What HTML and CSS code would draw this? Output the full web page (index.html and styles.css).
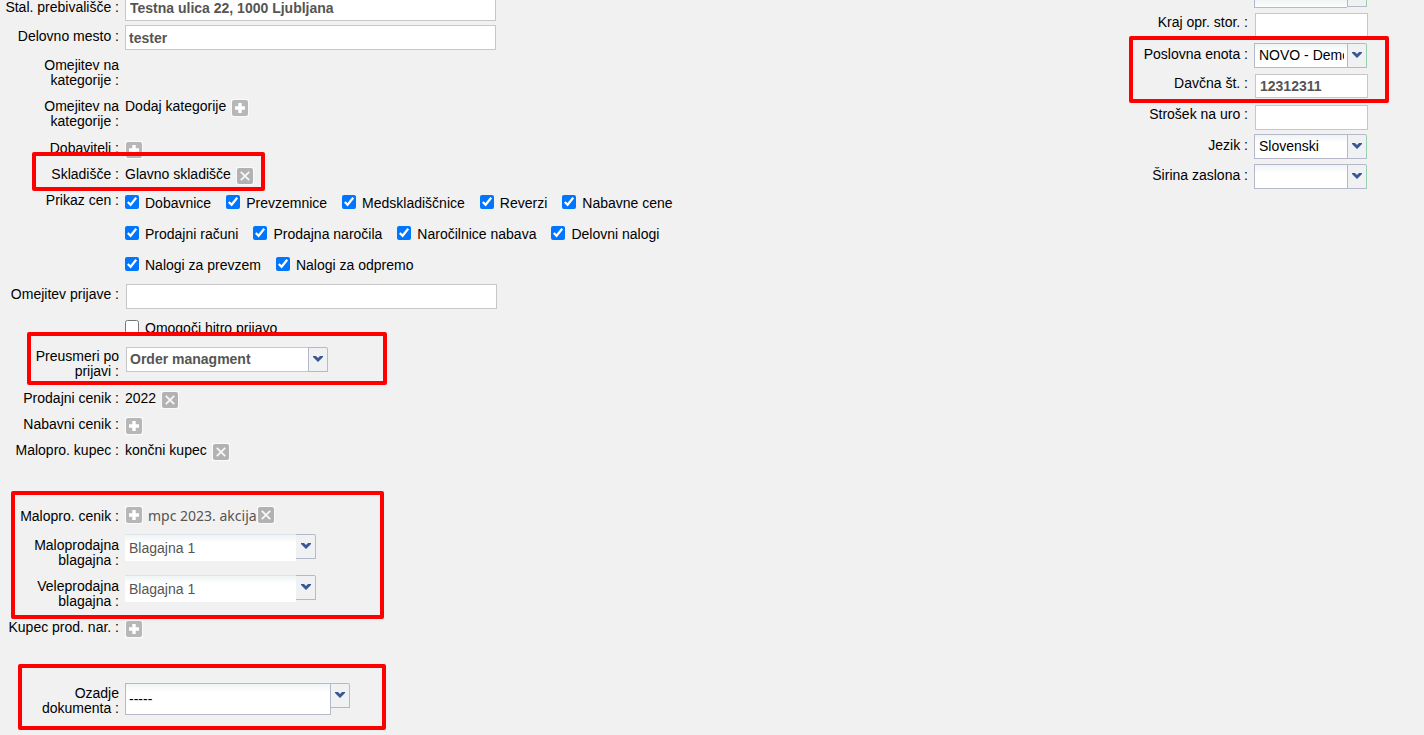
FILE: index.html
```html
<!DOCTYPE html>
<html lang="sl">
<head>
<meta charset="utf-8">
<meta name="viewport" content="width=device-width, initial-scale=1">
<title>Nastavitve uporabnika</title>
<link rel="stylesheet" href="styles.css">
</head>
<body>
<svg class="sprite" aria-hidden="true">
  <symbol id="plus" viewBox="0 0 18 18"><rect width="18" height="18" fill="#fafafa"/><rect x="1" y="1" width="16" height="16" rx="2" fill="#b7b7b7"/><path d="M9 4v10M4 9h10" stroke="#fff" stroke-width="3.4" fill="none"/></symbol>
  <symbol id="cross" viewBox="0 0 18 18"><rect width="18" height="18" fill="#fafafa"/><rect x="1" y="1" width="16" height="16" rx="2" fill="#b2b2b2"/><path d="M4.8 4.8l8.4 8.4M13.2 4.8l-8.4 8.4" stroke="#f6f6f6" stroke-width="1.9" fill="none"/></symbol>
  <symbol id="arrow" viewBox="0 0 10 6"><path d="M0 0h3l2 2 2-2h3v1L5 6 0 1z" fill="#3a5795"/></symbol>
</svg>
<form class="page">
  <section class="main">
    <div class="row top"><label for="addr">Stal. prebivališče :</label><input class="text bold cut" id="addr" value="Testna ulica 22, 1000 Ljubljana"></div>
    <div class="row h29"><label for="job">Delovno mesto :</label><input class="text bold" id="job" value="tester"></div>
    <div class="row h41"><span class="label">Omejitev na kategorije :</span></div>
    <div class="row h42"><span class="label">Omejitev na kategorije :</span><div class="value">Dodaj kategorije <button type="button" class="icon" aria-label="Dodaj kategorijo"><svg><use href="#plus"/></svg></button></div></div>
    <div class="row h26"><span class="label">Dobavitelj :</span><div class="value"><button type="button" class="icon" aria-label="Dodaj dobavitelja"><svg><use href="#plus"/></svg></button></div></div>
    <div class="row h26"><span class="label">Skladišče :</span><div class="value">Glavno skladišče <button type="button" class="icon" aria-label="Odstrani skladišče"><svg><use href="#cross"/></svg></button></div></div>
    <div class="row h94"><span class="label">Prikaz cen :</span>
      <div class="checks">
        <div class="line"><label><input type="checkbox" checked>Dobavnice</label><label><input type="checkbox" checked>Prevzemnice</label><label><input type="checkbox" checked>Medskladiščnice</label><label><input type="checkbox" checked>Reverzi</label><label><input type="checkbox" checked>Nabavne cene</label></div>
        <div class="line"><label><input type="checkbox" checked>Prodajni računi</label><label><input type="checkbox" checked>Prodajna naročila</label><label><input type="checkbox" checked>Naročilnice nabava</label><label><input type="checkbox" checked>Delovni nalogi</label></div>
        <div class="line"><label><input type="checkbox" checked>Nalogi za prevzem</label><label><input type="checkbox" checked>Nalogi za odpremo</label></div>
      </div>
    </div>
    <div class="row h32"><label for="limit">Omejitev prijave :</label><input class="text inset" id="limit"></div>
    <div class="row h30"><span class="label"></span><div class="line single"><label><input type="checkbox">Omogoči hitro prijavo</label></div></div>
    <div class="row h42"><label for="redir">Preusmeri po prijavi :</label><div class="combo plain w182"><select id="redir"><option>Order managment</option></select><span class="trigger"><svg><use href="#arrow"/></svg></span></div></div>
    <div class="row h26"><span class="label">Prodajni cenik :</span><div class="value">2022 <button type="button" class="icon" aria-label="Odstrani prodajni cenik"><svg><use href="#cross"/></svg></button></div></div>
    <div class="row h26"><span class="label">Nabavni cenik :</span><div class="value"><button type="button" class="icon" aria-label="Dodaj nabavni cenik"><svg><use href="#plus"/></svg></button></div></div>
    <div class="row h66"><span class="label">Malopro. kupec :</span><div class="value">končni kupec <button type="button" class="icon" aria-label="Odstrani kupca"><svg><use href="#cross"/></svg></button></div></div>
    <div class="row h29"><span class="label">Malopro. cenik :</span><div class="value tag"><button type="button" class="icon" aria-label="Dodaj maloprodajni cenik"><svg><use href="#plus"/></svg></button><span class="name">mpc 2023. akcija</span><button type="button" class="icon" aria-label="Odstrani maloprodajni cenik"><svg><use href="#cross"/></svg></button></div></div>
    <div class="row h41"><label for="retail">Maloprodajna blagajna :</label><div class="combo soft w171"><select id="retail"><option>Blagajna 1</option></select><span class="trigger"><svg><use href="#arrow"/></svg></span></div></div>
    <div class="row h41"><label for="whole">Veleprodajna blagajna :</label><div class="combo soft w171"><select id="whole"><option>Blagajna 1</option></select><span class="trigger"><svg><use href="#arrow"/></svg></span></div></div>
    <div class="row h66"><span class="label">Kupec prod. nar. :</span><div class="value"><button type="button" class="icon" aria-label="Dodaj kupca"><svg><use href="#plus"/></svg></button></div></div>
    <div class="row h42"><label for="bg">Ozadje dokumenta :</label><div class="combo tall"><select id="bg"><option>-----</option></select><span class="trigger"><svg><use href="#arrow"/></svg></span></div></div>
    <div class="mark mark-store"></div>
    <div class="mark mark-redirect"></div>
    <div class="mark mark-retail"></div>
    <div class="mark mark-background"></div>
  </section>
  <section class="side">
    <div class="row top"><span class="label"></span><div class="combo cut w94"><select aria-label="Izbor"><option></option></select><span class="trigger"></span></div></div>
    <div class="row h32"><label for="place">Kraj opr. stor. :</label><input class="text" id="place"></div>
    <div class="row h29"><label for="unit">Poslovna enota :</label><div class="combo w94"><select id="unit"><option>NOVO - Demo</option></select><span class="trigger"><svg><use href="#arrow"/></svg></span></div></div>
    <div class="row h31"><label for="tax">Davčna št. :</label><input class="text bold" id="tax" value="12312311"></div>
    <div class="row h31"><label for="cost">Strošek na uro :</label><input class="text" id="cost"></div>
    <div class="row h30"><label for="lang">Jezik :</label><div class="combo w94"><select id="lang"><option>Slovenski</option></select><span class="trigger"><svg><use href="#arrow"/></svg></span></div></div>
    <div class="row h30"><label for="width">Širina zaslona :</label><div class="combo w94"><select id="width"><option></option></select><span class="trigger"><svg><use href="#arrow"/></svg></span></div></div>
    <div class="mark mark-unit"></div>
  </section>
</form>
</body>
</html>
```
FILE: styles.css
```css
* { box-sizing: border-box; }
body {
  margin: 0;
  background: #f1f1f1;
  color: #000;
  font: 14px/15px "Liberation Sans", Arial, sans-serif;
}
.sprite { position: absolute; width: 0; height: 0; }
.page { display: flex; justify-content: space-between; min-height: 100vh; }
.main { position: relative; width: 700px; }
.side { position: relative; width: 300px; }

.row { display: grid; grid-template-columns: 119px 1fr; column-gap: 6px; align-items: start; }
.side .row { grid-template-columns: 124px 1fr; }
.row > label, .label { padding: 4px 0 0 4px; text-align: right; }
.row.top > label { padding-top: 0; }
.main .top { min-height: 25px; }
.side .top { min-height: 11px; }
.h26 { min-height: 26px; }
.h29 { min-height: 29px; }
.h30 { min-height: 30px; }
.h31 { min-height: 31px; }
.h32 { min-height: 32px; }
.h41 { min-height: 41px; }
.h42 { min-height: 42px; }
.h66 { min-height: 66px; }
.h94 { min-height: 94px; }

.text {
  width: 371px;
  height: 25px;
  padding: 0 4px;
  border: 1px solid #c6c8c8;
  background: #fff;
  color: #555;
  font: inherit;
}
.text.bold { padding-left: 3px; font-weight: bold; }
.text.inset { margin: 1px 0 0 1px; }
.text.cut { height: 21px; padding-left: 4px; padding-bottom: 5px; border-top: 0; }
.side .text { width: 113px; margin: 2px 0 0 1px; }
.side .text.bold { height: 24px; padding-left: 4px; }

.value { display: flex; align-items: flex-start; gap: 5px; padding-top: 4px; }
.icon { width: 18px; height: 18px; padding: 0; border: 0; background: none; }
.icon svg { display: block; width: 18px; height: 18px; }
.tag { align-items: center; gap: 0; padding-top: 1px; }
.name { margin-left: 5px; color: #555; font-family: "Noto Sans", sans-serif; }

.line { display: flex; gap: 15px; height: 31px; padding-bottom: 2px; }
.line.single { height: 28px; }
.line label { display: flex; align-items: center; gap: 6px; white-space: nowrap; }
.line input { width: 14px; height: 14px; margin: 0 0 3px; }

.combo { display: flex; align-items: flex-start; }
.combo select {
  appearance: none;
  height: 25px;
  margin: 0;
  padding: 0 3px 0 4px;
  border: 1px solid #b5b8c8;
  border-right: 0;
  border-radius: 0;
  background: linear-gradient(#f0f4f4, #fff 8px);
  color: #000;
  font: inherit;
}
.w94 select { width: 93px; }
.w171 select { width: 171px; }
.w182 select { width: 182px; }
.trigger {
  display: grid;
  place-items: center;
  width: 20px;
  height: 25px;
  padding-bottom: 2px;
  border: 1px solid #b5b8c8;
  border-right-color: #98cfae;
  border-top-right-radius: 2px;
  background: #f0f1f3;
}
.trigger svg { width: 10px; height: 6px; }
.combo.plain { padding: 2px 0 0 1px; }
.combo.plain select { padding-left: 3px; border-color: #c6c8c8; background: #fff; color: #555; font-weight: bold; }
.combo.soft select { height: 27px; border: 0; border-top: 1px solid #dde4e8; color: #555; }
.combo.soft .trigger { border-left: 0; }
.combo.tall { padding-top: 1px; }
.combo.tall select { width: 206px; height: 32px; padding-left: 3px; border-right: 1px solid #b5b8c8; }
.combo.tall .trigger { width: 19px; border-left: 0; }
.combo.cut select, .combo.cut .trigger { height: 8px; border-top: 0; }
.combo.cut .trigger { height: 7px; border-radius: 0; }

.mark { position: absolute; border: 4px solid #f00; border-radius: 2px; pointer-events: none; }
.mark-store { left: 32px; top: 152px; width: 233px; height: 39px; }
.mark-redirect { left: 27px; top: 332px; width: 360px; height: 53px; }
.mark-retail { left: 11px; top: 491px; width: 373px; height: 128px; }
.mark-background { left: 18px; top: 664px; width: 368px; height: 66px; }
.mark-unit { left: 5px; top: 36px; width: 260px; height: 67px; }
```
